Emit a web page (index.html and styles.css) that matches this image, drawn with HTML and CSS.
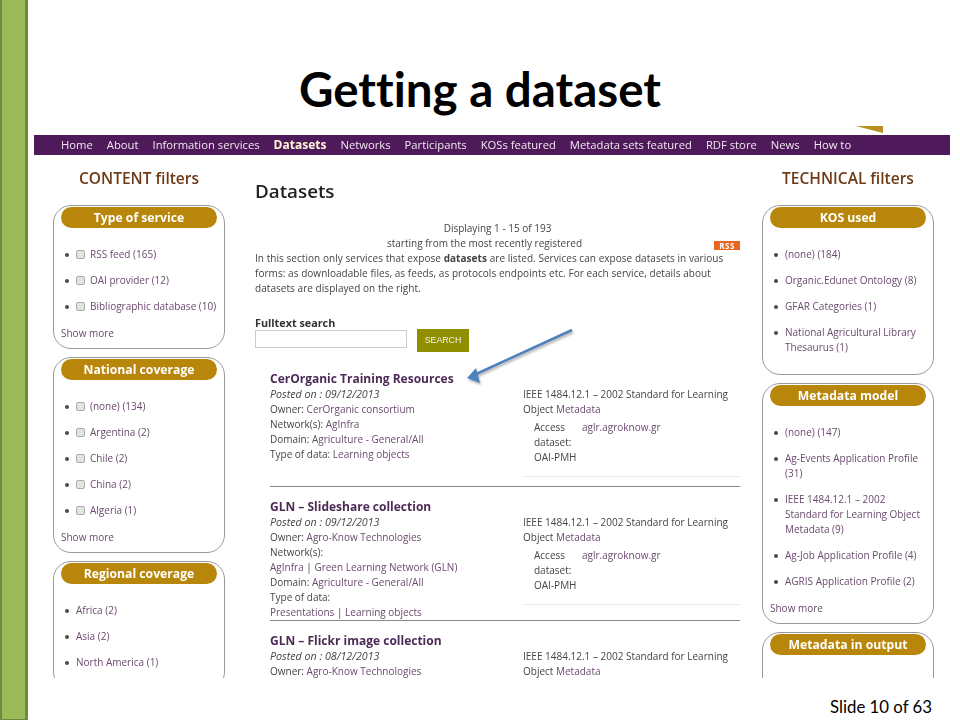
FILE: index.html
```
<!DOCTYPE html>
<html lang="en">
<head>
<meta charset="utf-8">
<title>Getting a dataset</title>
<link rel="stylesheet" href="styles.css">
</head>
<body>
<div class="slide">
  <div class="rail"></div>
  <main class="main">
    <h1 class="title">Getting a dataset</h1>
    <div class="shot">
      <svg class="corner" width="28" height="8" viewBox="0 0 28 8"><polygon points="0,0 27,0 27,7" fill="#b8901f"/></svg>
      <nav class="nav">
        <a>Home</a><a>About</a><a>Information services</a><a class="on">Datasets</a><a>Networks</a><a>Participants</a><a>KOSs featured</a><a>Metadata sets featured</a><a>RDF store</a><a>News</a><a>How to</a>
      </nav>
      <div class="cols">
        <aside>
          <h3 class="side-h">CONTENT filters</h3>
          <section class="box">
            <div class="pill">Type of service</div>
            <ul>
              <li><span class="cb"></span>RSS feed (165)</li>
              <li><span class="cb"></span>OAI provider (12)</li>
              <li><span class="cb"></span>Bibliographic database (10)</li>
            </ul>
            <a class="more">Show more</a>
          </section>
          <section class="box">
            <div class="pill">National coverage</div>
            <ul>
              <li><span class="cb"></span>(none) (134)</li>
              <li><span class="cb"></span>Argentina (2)</li>
              <li><span class="cb"></span>Chile (2)</li>
              <li><span class="cb"></span>China (2)</li>
              <li><span class="cb"></span>Algeria (1)</li>
            </ul>
            <a class="more">Show more</a>
          </section>
          <section class="box">
            <div class="pill">Regional coverage</div>
            <ul>
              <li>Africa (2)</li>
              <li>Asia (2)</li>
              <li>North America (1)</li>
            </ul>
          </section>
        </aside>
        <div class="center">
          <h2 class="page-h">Datasets</h2>
          <div class="intro">
            <p class="mid">Displaying 1 - 15 of 193</p>
            <span class="rss">RSS</span>
            <p class="mid">starting from the most recently registered</p>
            <p class="lead">In this section only services that expose <b>datasets</b> are listed. Services can expose datasets in various forms: as downloadable files, as feeds, as protocols endpoints etc. For each service, details about datasets are displayed on the right.</p>
          </div>
          <div class="search-label">Fulltext search</div>
          <div class="search">
            <div class="input"></div>
            <div class="btn">SEARCH</div>
          </div>
          <article class="entry">
            <h4>CerOrganic Training Resources</h4>
            <div class="entry-grid">
              <div>
                <p><i>Posted on : 09/12/2013</i></p>
                <p>Owner: <a>CerOrganic consortium</a></p>
                <p>Network(s): <a>AgInfra</a></p>
                <p>Domain: <a>Agriculture - General/All</a></p>
                <p>Type of data: <a>Learning objects</a></p>
              </div>
              <div class="meta">
                <p>IEEE 1484.12.1 – 2002 Standard for Learning Object <a>Metadata</a></p>
                <div class="access"><div class="access-l">Access dataset: OAI-PMH</div><a>aglr.agroknow.gr</a></div>
              </div>
            </div>
          </article>
          <article class="entry">
            <h4>GLN – Slideshare collection</h4>
            <div class="entry-grid">
              <div>
                <p><i>Posted on : 09/12/2013</i></p>
                <p>Owner: <a>Agro-Know Technologies</a></p>
                <p>Network(s):</p>
                <p><a>AgInfra</a> | <a>Green Learning Network (GLN)</a></p>
                <p>Domain: <a>Agriculture - General/All</a></p>
                <p>Type of data:</p>
                <p><a>Presentations</a> | <a>Learning objects</a></p>
              </div>
              <div class="meta">
                <p>IEEE 1484.12.1 – 2002 Standard for Learning Object <a>Metadata</a></p>
                <div class="access"><div class="access-l">Access dataset: OAI-PMH</div><a>aglr.agroknow.gr</a></div>
              </div>
            </div>
          </article>
          <article class="entry">
            <h4>GLN – Flickr image collection</h4>
            <div class="entry-grid">
              <div>
                <p><i>Posted on : 08/12/2013</i></p>
                <p>Owner: <a>Agro-Know Technologies</a></p>
              </div>
              <div class="meta">
                <p>IEEE 1484.12.1 – 2002 Standard for Learning Object <a>Metadata</a></p>
              </div>
            </div>
          </article>
        </div>
        <aside>
          <h3 class="side-h">TECHNICAL filters</h3>
          <section class="box">
            <div class="pill">KOS used</div>
            <ul>
              <li>(none) (184)</li>
              <li>Organic.Edunet Ontology (8)</li>
              <li>GFAR Categories (1)</li>
              <li>National Agricultural Library Thesaurus (1)</li>
            </ul>
          </section>
          <section class="box">
            <div class="pill">Metadata model</div>
            <ul>
              <li>(none) (147)</li>
              <li>Ag-Events Application Profile (31)</li>
              <li>IEEE 1484.12.1 – 2002 Standard for Learning Object Metadata (9)</li>
              <li>Ag-Job Application Profile (4)</li>
              <li>AGRIS Application Profile (2)</li>
            </ul>
            <a class="more">Show more</a>
          </section>
          <section class="box box-open">
            <div class="pill">Metadata in output</div>
          </section>
        </aside>
      </div>
      <svg class="arrow" width="120" height="60" viewBox="0 0 120 60">
        <line x1="112" y1="2" x2="14" y2="47" stroke="#4f81bd" stroke-width="2.5"/>
        <polygon points="7,50 16,40 20,55" fill="#4f81bd"/>
      </svg>
    </div>
    <footer class="foot">Slide 10 of 63</footer>
  </main>
</div>
</body>
</html>
```

FILE: styles.css
```
* { box-sizing: border-box; }
html, body { margin: 0; padding: 0; background: #fff; }
.slide { width: 960px; height: 720px; display: flex; overflow: hidden; font-family: "Open Sans", "Noto Sans", sans-serif; }
.rail { width: 28px; flex: none; background: #9bbb59; border-left: 2px solid #71893f; border-right: 3px solid #71893f; border-bottom: 1px solid #71893f; }
.main { flex: 1; padding-left: 6px; display: flex; flex-direction: column; }
.title { margin: 0; height: 126px; padding-top: 65px; padding-right: 34px; text-align: center; font: 700 47.5px/1 Lato, "Liberation Sans", sans-serif; font-variant-ligatures: none; color: #000; }
.shot { position: relative; width: 916px; height: 552px; overflow: hidden; font-size: 10px; line-height: 15px; color: #444; filter: blur(0.3px); }
.corner { position: absolute; left: 822px; top: 0; }
.arrow { position: absolute; left: 426px; top: 202px; filter: drop-shadow(1px 2px 1px rgba(0,0,0,.3)); }
.nav { margin-top: 9px; height: 20px; background: #4f1a5a; padding: 0 0 2px 27px; display: flex; gap: 14px; align-items: center; color: #f0e8f0; font-size: 11.25px; white-space: nowrap; }
.nav .on { font-weight: 700; font-size: 12px; color: #fff6d8; }
.cols { display: grid; grid-template-columns: 172px 493px 172px; column-gap: 22px; padding-left: 19px; }
.cols > .center { margin-left: 8px; width: 485px; }
.side-h { margin: 0; height: 50px; padding-top: 14px; text-align: center; font-size: 15.5px; line-height: 18px; font-weight: 600; color: #6e3a17; }
.box { border: 1px solid #999; border-radius: 18px; padding: 1px 7px 8px; margin-bottom: 8px; }
.box-open { min-height: 80px; }
.pill { height: 21px; border-radius: 11px; background: #b8860b; color: #fff; font-weight: 700; font-size: 12.2px; line-height: 21px; text-align: center; }
.box ul { margin: 19px 0 0; padding: 0 0 0 15px; color: #6a4a6e; list-style: none; }
.box li { position: relative; margin-bottom: 11px; }
.box li::before { content: ""; position: absolute; left: -11px; top: 6px; width: 4px; height: 4px; border-radius: 50%; background: #4a4a4a; }
.cb { display: inline-block; width: 9px; height: 9px; margin-right: 5px; vertical-align: -1px; border: 1px solid #aaa; border-radius: 2px; background: #e4e4e4; }
.more { display: block; padding-top: 1px; margin-bottom: -1px; color: #6a4a6e; }
.page-h { margin: 24px 0 18px; font-size: 18.8px; line-height: 24px; font-weight: 600; color: #222; }
.intro p { margin: 0; }
.mid { text-align: center; }
.intro .lead { letter-spacing: .05px; }
.rss { float: right; margin-top: 5px; width: 26px; height: 9px; background: #e8661f; color: #fff; font-size: 8px; font-weight: 700; line-height: 9px; letter-spacing: .5px; text-align: center; }
.search-label { margin-top: 19px; font-size: 10.8px; font-weight: 700; color: #333; }
.search { display: flex; gap: 10px; align-items: flex-start; }
.input { width: 152px; height: 18px; border: 1px solid #ccc; }
.btn { width: 52px; height: 23px; margin-top: -1px; background: #8f8f00; color: #f4f4f4; font: 8.8px/23px "Liberation Sans", sans-serif; text-align: center; }
.entry { margin: 0 0 12px 15px; border-bottom: 1px solid #888; }
.search + .entry { margin-top: 19px; }
.entry h4 { margin: 0; font-size: 12px; line-height: 16px; font-weight: 700; color: #4d2a56; }
.entry p { margin: 0; }
.entry i { font-size: 10.7px; }
.entry-grid { display: grid; grid-template-columns: 253px 217px; }
.entry a { color: #6a4a6e; }
.meta { margin-bottom: 9px; }
.access { display: grid; grid-template-columns: 48px 1fr; margin-top: 3px; padding: 0 0 11px 11px; border-bottom: 1px solid #e8e8e8; }
.access-l { width: 44px; }
.foot { flex: 1; padding: 19px 28px 0 0; text-align: right; font: 400 16.8px/20px Lato, "Liberation Sans", sans-serif; color: #000; }
```
